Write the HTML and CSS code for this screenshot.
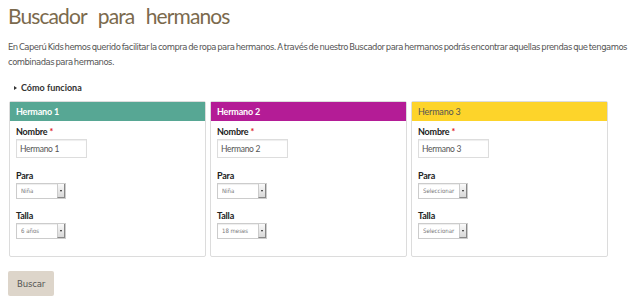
FILE: index.html
```html
<!DOCTYPE html>
<html>

<head>
  <title>Buscador para hermanos</title>
  <link rel="stylesheet" href="styles.css">
</head>

<body>
  <h1 class="page-title">Buscador para hermanos</h1>
  <p class="intro">En Caperú Kids hemos querido facilitar la compra de ropa para hermanos. A través de nuestro Buscador para hermanos podrás encontrar aquellas prendas que tengamos combinadas para hermanos.</p>

  <div class="howto"><span class="howto-arrow"></span>Cómo funciona</div>

  <form class="siblings">
    <div class="cards">
      <div class="card">
        <div class="card-head head-teal">Hermano 1</div>
        <div class="card-body">
          <label class="field-label">Nombre <span class="req">*</span></label>
          <input type="text" class="name-input" value="Hermano 1">

          <label class="field-label">Para</label>
          <div class="select-box">
            <select>
              <option>Niña</option>
            </select>
          </div>

          <label class="field-label">Talla</label>
          <div class="select-box">
            <select>
              <option>6 años</option>
            </select>
          </div>
        </div>
      </div>

      <div class="card">
        <div class="card-head head-magenta">Hermano 2</div>
        <div class="card-body">
          <label class="field-label">Nombre <span class="req">*</span></label>
          <input type="text" class="name-input" value="Hermano 2">

          <label class="field-label">Para</label>
          <div class="select-box">
            <select>
              <option>Niña</option>
            </select>
          </div>

          <label class="field-label">Talla</label>
          <div class="select-box">
            <select>
              <option>18 meses</option>
            </select>
          </div>
        </div>
      </div>

      <div class="card">
        <div class="card-head head-yellow">Hermano 3</div>
        <div class="card-body">
          <label class="field-label">Nombre <span class="req">*</span></label>
          <input type="text" class="name-input" value="Hermano 3">

          <label class="field-label">Para</label>
          <div class="select-box">
            <select>
              <option>Seleccionar</option>
            </select>
          </div>

          <label class="field-label">Talla</label>
          <div class="select-box">
            <select>
              <option>Seleccionar</option>
            </select>
          </div>
        </div>
      </div>
    </div>

    <button type="button" class="search-btn">Buscar</button>
  </form>
</body>

</html>
```

FILE: styles.css
```css
body {
  margin: 0;
  padding: 0 8px;
  font-family: "DejaVu Sans Condensed", sans-serif;
  color: #555;
  background: #fff;
}

.page-title {
  margin: 0;
  padding-top: 3px;
  font-family: Lato, "DejaVu Sans", sans-serif;
  font-weight: normal;
  font-size: 21px;
  line-height: 26px;
  letter-spacing: -0.9px;
  word-spacing: 7px;
  color: #7b6a4d;
}

.intro {
  margin: 10px 0 0 0;
  font-size: 9.4px;
  letter-spacing: -0.5px;
  word-spacing: -0.9px;
  line-height: 15px;
  color: #555;
}

.howto {
  margin-top: 13px;
  padding-left: 6px;
  font-family: Lato, sans-serif;
  font-weight: bold;
  font-size: 9px;
  line-height: 12px;
  color: #333;
  display: flex;
  align-items: center;
}

.howto-arrow {
  width: 0;
  height: 0;
  border-top: 2.5px solid transparent;
  border-bottom: 2.5px solid transparent;
  border-left: 3px solid #333;
  margin-right: 4px;
}

.cards {
  display: flex;
  gap: 4px;
  margin-top: 7px;
  margin-left: 1px;
}

.card {
  width: 195px;
  height: 154px;
  border: 1px solid #dcdcdc;
  border-radius: 2px;
}

.card-head {
  height: 19px;
  line-height: 19px;
  padding-left: 6px;
  font-family: Lato, sans-serif;
  font-weight: bold;
  font-size: 9px;
  letter-spacing: -0.2px;
  color: #fff;
}

.head-teal {
  background-color: #57a794;
}

.head-magenta {
  background-color: #b41c96;
}

.head-yellow {
  background-color: #fdd42a;
  color: #555;
  font-weight: normal;
}

.card-body {
  padding: 5px 6px 0;
  display: flex;
  flex-direction: column;
  align-items: flex-start;
}

.field-label {
  font-family: Lato, sans-serif;
  font-weight: bold;
  font-size: 9px;
  letter-spacing: -0.2px;
  line-height: 12px;
  color: #222;
  margin-bottom: 1px;
}

.req {
  color: #e02020;
}

.name-input {
  width: 63px;
  height: 17px;
  padding: 0 3px;
  border: 1px solid #ddd;
  box-shadow: inset 0 1px 1px #eee;
  font-family: Lato, sans-serif;
  font-size: 8.5px;
  letter-spacing: -0.3px;
  color: #555;
  margin: 0 0 12px 0;
  box-sizing: content-box;
}

.select-box {
  position: relative;
  width: 48px;
  height: 14px;
  border: 1px solid #ccc;
  box-shadow: inset 0 1px 1px #eee;
  margin-bottom: 11px;
  background: #fff;
}

.select-box select {
  appearance: none;
  -webkit-appearance: none;
  display: block;
  border: none;
  background: transparent;
  width: 100%;
  height: 14px;
  line-height: 14px;
  margin: 0;
  padding: 0 0 0 4px;
  font-family: "DejaVu Sans Condensed", sans-serif;
  font-size: 6px;
  color: #777;
  outline: none;
}

.select-box::after {
  content: "";
  position: absolute;
  top: 0;
  right: 0;
  width: 6px;
  height: 13px;
  border-left: 1px solid #ccc;
  border-right: 1px solid #888;
  border-bottom: 1px solid #888;
  background: #e6e6e6 linear-gradient(#fafafa, #d8d8d8);
}

.select-box::before {
  content: "";
  position: absolute;
  z-index: 1;
  top: 6px;
  right: 3px;
  border-top: 2px solid #222;
  border-left: 1.5px solid transparent;
  border-right: 1.5px solid transparent;
}

.search-btn {
  margin-top: 14px;
  width: 46px;
  height: 25px;
  border: none;
  border-radius: 2px;
  background-color: #ddd5ca;
  font-family: "DejaVu Sans Condensed", sans-serif;
  font-size: 9.5px;
  letter-spacing: -0.2px;
  color: #555;
  cursor: pointer;
}
```
